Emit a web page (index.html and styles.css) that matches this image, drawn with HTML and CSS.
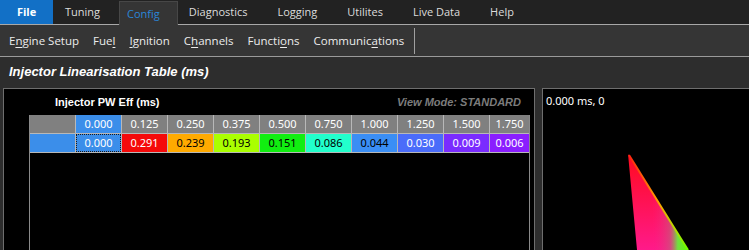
FILE: index.html
```html
<!DOCTYPE html>
<html>
<head>
<meta charset="utf-8">
<link rel="stylesheet" href="styles.css">
</head>
<body>
<div class="tabs">
  <div class="tab tab-file">File</div>
  <div class="tab tab-tuning">Tuning</div>
  <div class="tab tab-active">Config</div>
  <div class="tab">Diagnostics</div>
  <div class="tab">Logging</div>
  <div class="tab">Utilites</div>
  <div class="tab">Live Data</div>
  <div class="tab">Help</div>
</div>
<div class="toolbar">
  <span class="tool">E<u>n</u>gine Setup</span>
  <span class="tool">Fue<u>l</u></span>
  <span class="tool"><u>I</u>gnition</span>
  <span class="tool">C<u>h</u>annels</span>
  <span class="tool">Functi<u>o</u>ns</span>
  <span class="tool">Communic<u>a</u>tions</span>
  <span class="sep"></span>
</div>
<div class="title">Injector Linearisation Table (ms)</div>
<div class="panels">
  <div class="panel-left">
    <div class="panel-head">
      <span class="head-name">Injector PW Eff (ms)</span>
      <span class="head-mode">View Mode: STANDARD</span>
    </div>
    <div class="table-wrap">
      <div class="grid">
        <div class="c hdr">&nbsp;</div>
        <div class="c sel">0.000</div>
        <div class="c hdr">0.125</div>
        <div class="c hdr">0.250</div>
        <div class="c hdr">0.375</div>
        <div class="c hdr">0.500</div>
        <div class="c hdr">0.750</div>
        <div class="c hdr">1.000</div>
        <div class="c hdr">1.250</div>
        <div class="c hdr">1.500</div>
        <div class="c hdr">1.750</div>

        <div class="c sel">&nbsp;</div>
        <div class="c sel focus">0.000</div>
        <div class="c v-red">0.291</div>
        <div class="c v-orange">0.239</div>
        <div class="c v-lime">0.193</div>
        <div class="c v-green">0.151</div>
        <div class="c v-cyan">0.086</div>
        <div class="c v-sky">0.044</div>
        <div class="c v-blue">0.030</div>
        <div class="c v-violet">0.009</div>
        <div class="c v-purple">0.006</div>
      </div>
    </div>
  </div>
  <div class="panel-right">
    <div class="readout">0.000 ms, 0</div>
    <svg class="chart" width="207" height="162" viewBox="0 0 207 162">
      <defs>
        <linearGradient id="gv" x1="0" y1="0" x2="0" y2="1">
          <stop offset="0" stop-color="#ff0a1e"/>
          <stop offset="1" stop-color="#ff1a8a"/>
        </linearGradient>
        <linearGradient id="gh" x1="95" y1="0" x2="146" y2="0" gradientUnits="userSpaceOnUse">
          <stop offset="0.3" stop-color="#ff1a8a" stop-opacity="0"/>
          <stop offset="0.65" stop-color="#c0607a" stop-opacity="0.6"/>
          <stop offset="0.8" stop-color="#70e040" stop-opacity="1"/>
          <stop offset="1" stop-color="#60ff00" stop-opacity="1"/>
        </linearGradient>
        <linearGradient id="ge" x1="86" y1="66" x2="146" y2="162" gradientUnits="userSpaceOnUse">
          <stop offset="0" stop-color="#ff2010"/>
          <stop offset="0.5" stop-color="#ffa000"/>
          <stop offset="0.8" stop-color="#b0e000"/>
          <stop offset="1" stop-color="#70ff00"/>
        </linearGradient>
      </defs>
      <polygon points="86,66 95,162 146,162" fill="url(#gv)"/>
      <polygon points="86,66 95,162 146,162" fill="url(#gh)"/>
      <line x1="87" y1="67" x2="146" y2="162" stroke="url(#ge)" stroke-width="2"/>
    </svg>
  </div>
</div>
</body>
</html>
```

FILE: styles.css
```css
* { box-sizing: border-box; }
html, body {
  margin: 0;
  padding: 0;
}
body {
  width: 749px;
  height: 250px;
  overflow: hidden;
  background: #2d2d2d;
  font-family: "Open Sans", "Noto Sans", sans-serif;
  color: #e6e6e6;
}

.tabs {
  display: flex;
  align-items: flex-end;
  height: 25px;
  background: #222222;
  border-bottom: 1px solid #a8a8a8;
}
.tab {
  height: 24px;
  line-height: 23px;
  font-size: 11px;
  padding: 0 19px 0 11px;
  color: #dcdcdc;
  white-space: nowrap;
}
.tab-file {
  width: 53px;
  padding: 0;
  text-align: center;
  background: #1270c6;
  color: #ffffff;
  font-weight: 700;
}
.tab-tuning {
  padding: 0 19px 0 12px;
}
.tab-active {
  height: 24px;
  margin-bottom: -1px;
  padding: 0 17px 0 7px;
  background: #353535;
  border: 1px solid #474747;
  border-bottom: none;
  color: #2a86d8;
}

.toolbar {
  display: flex;
  align-items: center;
  height: 32px;
  padding-left: 9px;
  background: #353535;
  border-bottom: 1px solid #9a9a9a;
  font-size: 11.5px;
  color: #ececec;
}
.tool {
  margin-right: 14px;
  white-space: nowrap;
}
.tool u {
  text-decoration-thickness: 1px;
  text-underline-offset: 2px;
}
.sep {
  width: 1px;
  height: 26px;
  margin-left: -4px;
  background: #a0a0a0;
}

.title {
  height: 31px;
  line-height: 30px;
  padding-left: 9px;
  font-family: "Liberation Sans", Arial, sans-serif;
  font-weight: 700;
  font-style: italic;
  font-size: 13px;
  color: #ffffff;
}

.panels {
  display: flex;
  gap: 7px;
  padding-left: 3px;
}
.panel-left {
  width: 532px;
  height: 162px;
  flex: none;
  background: #000;
  border: 1px solid #6e6e6e;
  border-bottom: none;
}
.panel-head {
  display: flex;
  justify-content: space-between;
  align-items: center;
  height: 26px;
  padding: 0 13px 0 51px;
  font-family: "Liberation Sans", Arial, sans-serif;
  font-weight: 700;
  font-size: 11px;
}
.head-name {
  color: #ffffff;
}
.head-mode {
  color: #7c7c7c;
  font-style: italic;
}
.table-wrap {
  width: 501px;
  height: 135px;
  margin-left: 25px;
  border-left: 1px solid #8a8a8a;
  border-right: 1px solid #8a8a8a;
}
.grid {
  display: grid;
  grid-template-columns: repeat(10, 45px) 39px;
  grid-auto-rows: 18px;
  gap: 1px;
  padding: 0 0 1px 0;
  background: #b8b8b8;
}
.c {
  font-family: "Noto Sans", "Open Sans", sans-serif;
  font-size: 11px;
  line-height: 18px;
  text-align: center;
  color: #ffffff;
  white-space: nowrap;
  overflow: hidden;
}
.hdr { background: #808080; }
.sel { background: #3b8eea; }
.focus {
  outline: 1px dotted #1a1a1a;
  outline-offset: -1px;
}
.v-red { background: #f50a0a; }
.v-orange { background: #ffaa00; color: #000; }
.v-lime { background: #aaff00; color: #000; }
.v-green { background: #11ee11; color: #000; }
.v-cyan { background: #22ffcc; color: #000; }
.v-sky { background: #3a8ef5; color: #000; }
.v-blue { background: #4a6cfa; }
.v-violet { background: #7a2cff; }
.v-purple { background: #8a1eff; }

.panel-right {
  position: relative;
  flex: 1;
  height: 162px;
  background: #000;
  border: 1px solid #6e6e6e;
  border-right: none;
  border-bottom: none;
}
.readout {
  padding: 4px 0 0 3px;
  font-family: "Noto Sans", "Open Sans", sans-serif;
  font-size: 11px;
  color: #ffffff;
}
.chart {
  position: absolute;
  left: -1px;
  top: -1px;
}
```
